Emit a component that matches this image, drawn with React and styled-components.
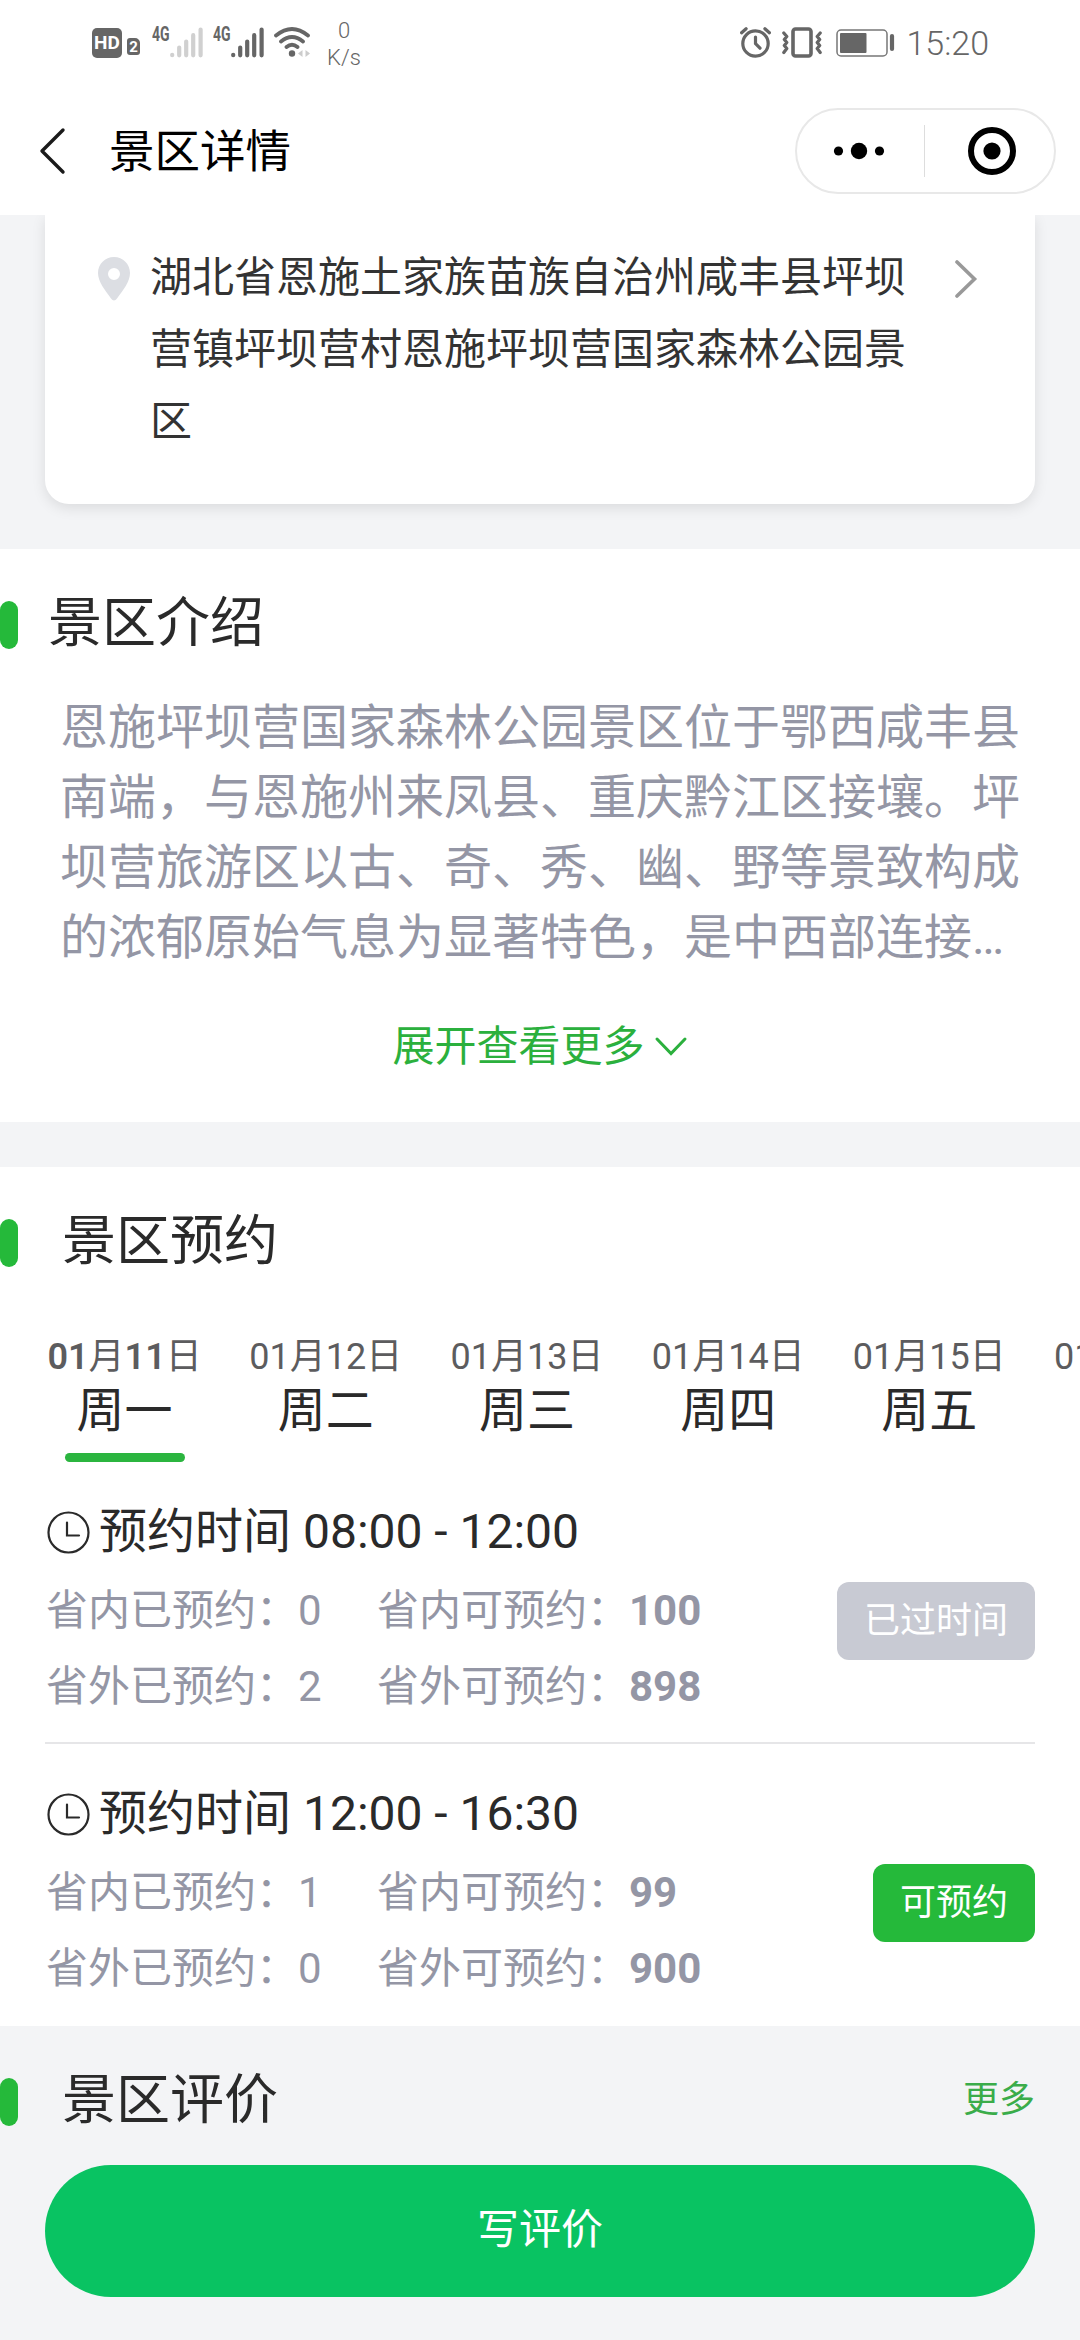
import React from 'react';
import styled, { createGlobalStyle } from 'styled-components';

const days = [
  { month: '01', day: '11', week: '周一' },
  { month: '01', day: '12', week: '周二' },
  { month: '01', day: '13', week: '周三' },
  { month: '01', day: '14', week: '周四' },
  { month: '01', day: '15', week: '周五' },
  { month: '01', day: '16', week: '周六' },
];

const slots = [
  { time: '08:00 - 12:00', inner: [0, 100], outer: [2, 898], expired: true },
  { time: '12:00 - 16:30', inner: [1, 99], outer: [0, 900], expired: false },
];

const intro = [
  '恩施坪坝营国家森林公园景区位于鄂西咸丰县',
  '南端，与恩施州来凤县、重庆黔江区接壤。坪',
  '坝营旅游区以古、奇、秀、幽、野等景致构成',
  '的浓郁原始气息为显著特色，是中西部连接…',
];

const Signal = ({ color }) => (
  <svg width="34" height="31" viewBox="0 0 34 31" stroke={color} strokeWidth="4.2" strokeLinecap="round">
    <path d="M2.2 27.8v.4M9.2 20.5v7.8M16.2 14.5v13.8M23.2 8.2v20.1M30.6 2.6v25.7" />
  </svg>
);

const Wifi = () => (
  <svg width="37" height="31" viewBox="0 0 37 31" fill="none" stroke="#666" strokeWidth="3.8" strokeLinecap="round">
    <path d="M2 8.5Q18 -4.5 34 8.5M7 14.5Q18 5.5 29 14.5M12.5 20Q18 15.5 23.5 20" />
    <circle cx="18" cy="26.5" r="3.2" fill="#666" stroke="none" />
    <path d="M28.5 23v7l-4.500-3.500zM31.500 23v7l4.500-3.500z" fill="#ccc" stroke="none" />
  </svg>
);

const Alarm = () => (
  <svg width="31" height="31" viewBox="0 0 31 31" fill="none" stroke="#666" strokeWidth="3.2" strokeLinecap="round">
    <circle cx="15.5" cy="16.5" r="12.7" />
    <path d="M15.5 10v6.5l4.5 4.7M1.6 5.7l4.5-4M29.4 5.7l-4.5-4" />
  </svg>
);

const Vibrate = () => (
  <svg width="40" height="31" viewBox="0 0 40 31" fill="none" stroke="#666" strokeWidth="3.2" strokeLinecap="round" strokeLinejoin="round">
    <rect x="11" y="2" width="18" height="27" rx="2.5" strokeWidth="3.6" />
    <path d="M1.8 6l3 3.5-2.5 3 2.5 3-2.5 3 2.5 3-3 4M38.2 6l-3 3.5 2.5 3-2.5 3 2.5 3-2.5 3 3 4" />
  </svg>
);

const Battery = () => (
  <svg width="59" height="28" viewBox="0 0 59 28" fill="none">
    <rect x="1" y="1" width="50" height="26" rx="4" stroke="#777" strokeWidth="1.5" />
    <rect x="4" y="4" width="26.5" height="20" rx="1" fill="#666" />
    <path d="M56 7v13" stroke="#666" strokeWidth="4.2" strokeLinecap="round" />
  </svg>
);

const Clock = () => (
  <svg width="43" height="43" viewBox="0 0 43 43" fill="none" stroke="#2a2a2a" strokeWidth="2.2" strokeLinecap="round">
    <circle cx="21.5" cy="21.5" r="20" />
    <path d="M20 11.5v13h12" />
  </svg>
);

const Heading = ({ inset, children, extra }) => (
  <HeadingRow>
    <Marker />
    <HeadingText $inset={inset}>{children}</HeadingText>
    {extra}
  </HeadingRow>
);

const Slot = ({ time, inner, outer, expired }) => (
  <SlotBox>
    <SlotTitle><Clock />预约时间 {time}</SlotTitle>
    <SlotBody>
      <Stats>
        <span>省内已预约：{inner[0]}</span>
        <span>省内可预约：<b>{inner[1]}</b></span>
        <span>省外已预约：{outer[0]}</span>
        <span>省外可预约：<b>{outer[1]}</b></span>
      </Stats>
      <SlotButton $expired={expired}>{expired ? '已过时间' : '可预约'}</SlotButton>
    </SlotBody>
  </SlotBox>
);

const App = () => (
  <Page>
    <GlobalStyle />
    <StatusBar>
      <StatusGroup>
        <HdBadge>HD</HdBadge>
        <SimBadge>2</SimBadge>
        <Network><NetworkLabel>4G</NetworkLabel><Signal color="#d0d0d0" /></Network>
        <Network><NetworkLabel>4G</NetworkLabel><Signal color="#666" /></Network>
        <Wifi />
        <Speed><span>0</span><span>K/s</span></Speed>
      </StatusGroup>
      <StatusRight>
        <Alarm />
        <Vibrate />
        <Battery />
        <Time>15:20</Time>
      </StatusRight>
    </StatusBar>

    <NavBar>
      <svg width="27" height="48" viewBox="0 0 27 48" fill="none" stroke="#1a1a1a" strokeWidth="3.4" strokeLinecap="round" strokeLinejoin="round">
        <path d="M24 3L3 24l21 21" />
      </svg>
      <NavTitle>景区详情</NavTitle>
      <Capsule>
        <CapsuleButton>
          <svg width="52" height="18" viewBox="0 0 52 18">
            <circle cx="5.5" cy="9" r="4.6" />
            <circle cx="26" cy="9" r="8.2" />
            <circle cx="46.5" cy="9" r="4.6" />
          </svg>
        </CapsuleButton>
        <CapsuleDivider />
        <CapsuleButton $shift={6}>
          <svg width="50" height="50" viewBox="0 0 50 50">
            <circle cx="25" cy="25" r="21" fill="none" stroke="#000" strokeWidth="6" />
            <circle cx="25" cy="25" r="8.6" />
          </svg>
        </CapsuleButton>
      </Capsule>
    </NavBar>

    <AddressArea>
      <AddressCard>
        <PinIcon width="32" height="44" viewBox="0 0 32 44">
          <path d="M16 0C7 0 0 7 0 16c0 9 7 17 13 25.5q3 4 6 0C25 33 32 25 32 16 32 7 25 0 16 0zm0 11a6 6 0 1 1 0 12 6 6 0 0 1 0-12z" fill="#dcdee3" fillRule="evenodd" />
        </PinIcon>
        <Address>湖北省恩施土家族苗族自治州咸丰县坪坝营镇坪坝营村恩施坪坝营国家森林公园景区</Address>
        <ArrowIcon width="24" height="38" viewBox="0 0 24 38" fill="none" stroke="#999" strokeWidth="3.6" strokeLinecap="round">
          <path d="M3 2l17.5 17L3 36" />
        </ArrowIcon>
      </AddressCard>
    </AddressArea>

    <Section>
      <Heading inset={30}>景区介绍</Heading>
      <Intro>
        {intro.map(line => <div key={line}>{line}</div>)}
      </Intro>
      <Expand>
        展开查看更多
        <svg width="34" height="22" viewBox="0 0 34 22" fill="none" stroke="#2bb03d" strokeWidth="3" strokeLinecap="round">
          <path d="M3 3l14 14.5L31 3" />
        </svg>
      </Expand>
    </Section>

    <Gap />

    <Section>
      <Heading inset={44}>景区预约</Heading>
      <DayTabs>
        {days.map(({ month, day, week }, i) => (
          <DayTab key={day} $active={i === 0}>
            <DayDate><i>{month}</i>月<i>{day}</i>日</DayDate>
            <DayName>{week}</DayName>
          </DayTab>
        ))}
      </DayTabs>
      {slots.map(slot => <Slot key={slot.time} {...slot} />)}
    </Section>

    <Reviews>
      <Heading inset={44} extra={<More>更多</More>}>景区评价</Heading>
      <WriteButton>写评价</WriteButton>
    </Reviews>
  </Page>
);

export default App;

const GlobalStyle = createGlobalStyle`
  body {
    margin: 0;
    background: #f3f4f6;
    font-family: Roboto, "Noto Sans CJK SC", sans-serif;
    overflow: hidden;
  }

  svg {
    display: block;
    flex-shrink: 0;
  }
`;

const Page = styled.div`
  width: 1080px;
  height: 2340px;
  overflow: hidden;
  background: #f3f4f6;
  color: #2a2a2a;
`;

const StatusBar = styled.div`
  display: flex;
  justify-content: space-between;
  box-sizing: border-box;
  height: 86px;
  padding: 0 92px;
  background: #fff;
  color: #666;
`;

const StatusGroup = styled.div`
  display: flex;
  align-items: center;
  height: 85px;
`;

const StatusRight = styled(StatusGroup)`
  gap: 11px;

  svg:nth-child(3) {
    margin-left: 3px;
  }
`;

const HdBadge = styled.div`
  width: 30px;
  height: 30px;
  border-radius: 5px;
  background: #666;
  color: #fff;
  font-size: 19px;
  font-weight: 700;
  line-height: 30px;
  text-align: center;
`;

const SimBadge = styled.div`
  width: 13px;
  height: 17px;
  margin: 8px 12px 0 5px;
  border-radius: 3px 5px 3px 3px;
  background: #666;
  color: #fff;
  font-size: 15px;
  font-weight: 700;
  line-height: 18px;
  text-align: center;
`;

const Network = styled.div`
  display: flex;
  align-items: flex-start;
  margin-right: 9px;
`;

const NetworkLabel = styled.span`
  width: 18px;
  font-size: 20px;
  font-weight: 700;
  line-height: 14px;
  transform: scaleX(.7);
  transform-origin: left;
`;

const Speed = styled.div`
  display: flex;
  flex-direction: column;
  width: 40px;
  margin: 2px 0 0 13px;
  font-size: 22px;
  font-weight: 350;
  line-height: 27px;
  text-align: center;
`;

const Time = styled.span`
  margin-right: -1px;
  font-size: 34px;
  line-height: 40px;
  font-weight: 350;
`;

const NavBar = styled.div`
  display: flex;
  align-items: center;
  box-sizing: border-box;
  height: 129px;
  padding: 0 24px 0 39px;
  background: #fff;
  color: #000;
`;

const NavTitle = styled.div`
  flex: 1;
  margin: 5px 0 0 43px;
  font-size: 45.5px;
  line-height: 60px;
`;

const Capsule = styled.div`
  display: flex;
  align-items: center;
  box-sizing: border-box;
  width: 261px;
  height: 86px;
  border: 2px solid #e8e8e8;
  border-radius: 43px;
`;

const CapsuleButton = styled.div`
  flex: 1;
  display: flex;
  justify-content: center;
  padding-left: ${props => props.$shift || 0}px;
`;

const CapsuleDivider = styled.div`
  width: 1px;
  height: 52px;
  margin-left: 3px;
  background: #ddd;
`;

const AddressArea = styled.div`
  padding: 0 45px 45px;
  overflow: hidden;
`;

const AddressCard = styled.div`
  display: flex;
  align-items: flex-start;
  box-sizing: border-box;
  height: 289px;
  padding: 27px 50px 0 53px;
  border-radius: 0 0 24px 24px;
  background: #fff;
  box-shadow: 0 4px 14px rgba(0, 0, 0, .1);
`;

const PinIcon = styled.svg`
  margin-top: 15px;
`;

const Address = styled.div`
  width: 757px;
  margin-left: 20px;
  color: #333;
  font-size: 42px;
  line-height: 72px;
`;

const ArrowIcon = styled.svg`
  margin: 18px 0 0 47px;
`;

const Section = styled.section`
  padding-top: 40px;
  background: #fff;
`;

const HeadingRow = styled.div`
  display: flex;
  align-items: center;
  height: 72px;
`;

const Marker = styled.div`
  width: 18px;
  height: 48px;
  border-radius: 9px;
  background: #25b93a;
`;

const HeadingText = styled.div`
  flex: 1;
  padding-left: ${props => props.$inset}px;
  font-size: 54px;
  line-height: 70px;
  padding-bottom: 2px;
`;

const Intro = styled.div`
  padding: 32px 60px 44px;
  color: #9496a5;
  font-size: 48px;
  line-height: 70px;
  white-space: nowrap;
`;

const Expand = styled.div`
  display: flex;
  justify-content: center;
  align-items: center;
  gap: 9px;
  height: 60px;
  padding-bottom: 45px;
  color: #2bb03d;
  font-size: 42px;
  line-height: 60px;
`;

const Gap = styled.div`
  height: 45px;
`;

const DayTabs = styled.div`
  display: flex;
  gap: 48px;
  padding: 53px 0 0 48px;
  overflow: hidden;
`;

const DayTab = styled.div`
  flex-shrink: 0;
  display: flex;
  flex-direction: column;
  align-items: center;
  width: 153.2px;

  i {
    font-style: normal;
    font-weight: ${props => props.$active ? 600 : 400};
  }

  &::after {
    content: '';
    width: 120px;
    height: 9px;
    margin-top: 14px;
    border-radius: 4.5px;
    background: ${props => props.$active ? '#2bb53f' : 'transparent'};
  }
`;

const DayDate = styled.div`
  color: #5c5c5e;
  font-size: 36px;
  line-height: 50px;
  white-space: nowrap;
`;

const DayName = styled.div`
  padding-top: 1px;
  font-size: 48px;
  line-height: 56px;
`;

const SlotBox = styled.div`
  box-sizing: border-box;
  height: 282px;
  margin: 0 45px;
  padding: 38px 0 0 1px;
  border-bottom: 2px solid #e6e6e8;

  &:last-child {
    border-color: transparent;
  }
`;

const SlotTitle = styled.div`
  display: flex;
  align-items: center;
  gap: 9px;
  padding-left: 1px;
  font-size: 48px;
  line-height: 64px;
`;

const SlotBody = styled.div`
  display: flex;
  justify-content: space-between;
  align-items: flex-start;
  margin-top: 9px;
`;

const Stats = styled.div`
  display: grid;
  grid-template-columns: 331px auto;
  color: #9496a5;
  font-size: 42px;
  line-height: 76px;
`;

const SlotButton = styled.div`
  margin-top: 9px;
  padding: 0 27px;
  border-radius: 12px;
  background: ${props => props.$expired ? '#c8cad3' : '#25b93a'};
  color: #fff;
  font-size: 36px;
  line-height: 78px;
`;

const Reviews = styled.section`
  padding-top: 40px;
`;

const More = styled.div`
  margin-right: 45px;
  padding-bottom: 4px;
  color: #3aac4a;
  font-size: 36px;
  line-height: 50px;
`;

const WriteButton = styled.div`
  height: 132px;
  margin: 27px 45px 0;
  border-radius: 66px;
  background: #09c362;
  color: #fff;
  font-size: 42px;
  line-height: 130px;
  text-align: center;
`;
